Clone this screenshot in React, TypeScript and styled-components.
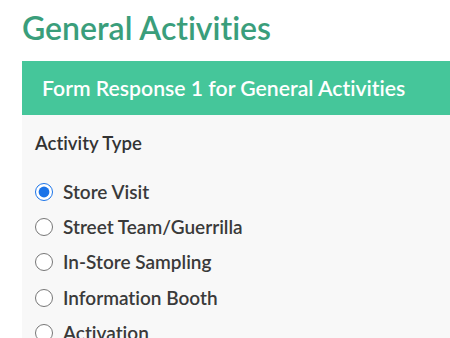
import styled, { createGlobalStyle } from "styled-components";

const GlobalStyle = createGlobalStyle`
  body {
    margin: 0;
    background: #fff;
    font-family: Lato, "Open Sans", sans-serif;
    font-variant-ligatures: none;
  }
`;

const Page = styled.div`
  padding: 8px 0 0 22px;
  overflow: hidden;
  height: 338px;
  box-sizing: border-box;
`;

const Title = styled.h1`
  margin: 0 0 14px;
  font-size: 32px;
  line-height: 39px;
  font-weight: 600;
  color: #3a9e7b;
`;

const Banner = styled.div`
  background: #45c69a;
  color: #fff;
  height: 54px;
  display: flex;
  align-items: center;
  padding-left: 20px;
  font-size: 21.2px;
  font-weight: 600;
`;

const Card = styled.div`
  background: #f8f8f8;
  padding: 16px 13px 0;
  min-height: 300px;
`;

const Label = styled.div`
  font-size: 18.6px;
  font-weight: 600;
  color: #333;
  line-height: 24px;
  margin-bottom: 25px;
`;

const Options = styled.div`
  display: flex;
  flex-direction: column;
  gap: 11.2px;
`;

const Option = styled.label`
  display: flex;
  align-items: center;
  gap: 10px;
  font-size: 19px;
  font-weight: 600;
  color: #3a3a3a;
  line-height: 24px;
`;

const Radio = styled.input.attrs({ type: "radio", name: "activity" })`
  margin: 0;
  width: 18px;
  height: 18px;
  accent-color: #1a73e8;
`;

const options = [
  "Store Visit",
  "Street Team/Guerrilla",
  "In-Store Sampling",
  "Information Booth",
  "Activation",
];

export default function App() {
  return (
    <>
      <GlobalStyle />
      <Page>
        <Title>General Activities</Title>
        <Banner>Form Response 1 for General Activities</Banner>
        <Card>
          <Label>Activity Type</Label>
          <Options>
            {options.map((o, i) => (
              <Option key={o}>
                <Radio defaultChecked={i === 0} />
                {o}
              </Option>
            ))}
          </Options>
        </Card>
      </Page>
    </>
  );
}
